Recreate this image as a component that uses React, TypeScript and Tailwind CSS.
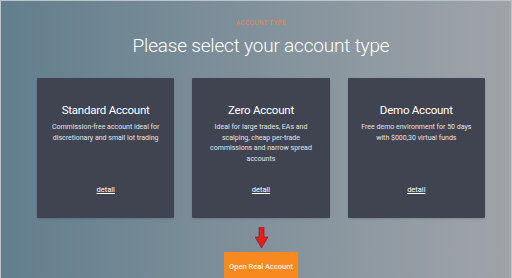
const accounts = [
  {
    title: 'Standard Account',
    body: 'Commission-free account ideal for discretionary and small lot trading',
  },
  {
    title: 'Zero Account',
    body: 'Ideal for large trades, EAs and scalping, cheap per-trade commissions and narrow spread accounts',
  },
  {
    title: 'Demo Account',
    body: 'Free demo environment for 50 days with $000,30 virtual funds',
  },
]

export default function App() {
  return (
    <section
      className="h-[278px] w-[512px] overflow-hidden border-x border-t border-[#b9c4cb] bg-gradient-to-r from-[#627e8d] to-[#a0a4a9] font-['Roboto',sans-serif]"
    >
      <div className="flex flex-col items-center pt-[18px] pl-[10px]">
        {/* Header */}
        <p className="text-[6.5px] uppercase tracking-[0.04em] text-[#e8874a] leading-[8px]">
          Account type
        </p>
        <h1 className="mt-[7px] text-[19px] leading-[24px] font-light text-white tracking-[-0.01em]">
          Please select your account type
        </h1>

        {/* Cards */}
        <div className="mt-[20px] grid w-[448px] grid-cols-3 gap-[18px]">
          {accounts.map(({ title, body }) => (
            <div
              key={title}
              className="flex h-[140px] flex-col items-center rounded-[1px] bg-[#3f4450] px-[12px] pt-[25px] text-center shadow-sm"
            >
              <h3 className="text-[11.5px] leading-[14px] tracking-[-0.02em] text-white">{title}</h3>
              <p className="mt-[5px] text-[7px] leading-[10.7px] text-[#e2e4e8]">
                {body}
              </p>
              <a className="mt-auto mb-[24px] text-[7.5px] leading-[9px] text-white underline">
                detail
              </a>
            </div>
          ))}
        </div>

        {/* Arrow */}
        <svg className="mt-[9px] block" width="13" height="21" viewBox="0 0 13 21" aria-hidden="true">
          <path d="M4 0 H9 V10 H13 L6.5 21 L0 10 H4 Z" fill="#e41e1e" stroke="#8a1010" strokeWidth="0.6" />
        </svg>

        <button className="mt-[4px] h-[30px] w-[74px] shrink-0 bg-[#f7891e] text-[7.5px] font-medium text-[#fff4e8]">
          Open Real Account
        </button>
      </div>
    </section>
  )
}
